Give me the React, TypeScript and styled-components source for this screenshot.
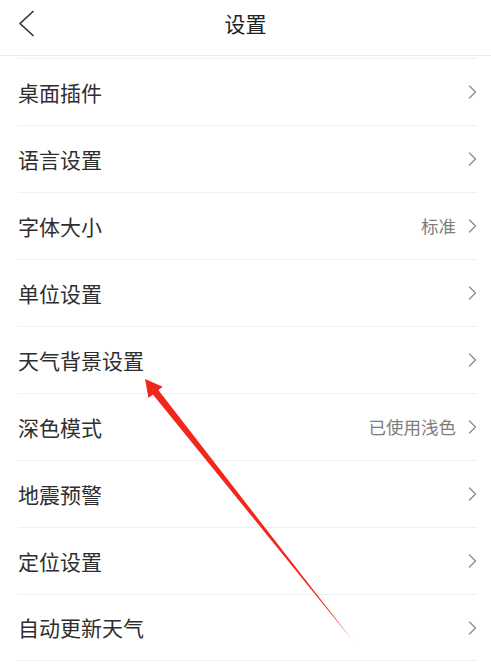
import React from "react";
import styled, { createGlobalStyle } from "styled-components";

const Global = createGlobalStyle`
  html, body { margin: 0; padding: 0; background: #fff; }
  body { font-family: "Noto Sans CJK SC", "Noto Sans", sans-serif; }
`;

const Page = styled.div`
  position: relative;
  width: 491px;
  height: 664px;
  overflow: hidden;
  background: #fff;
`;

const Header = styled.header`
  height: 56px;
  box-sizing: border-box;
  border-bottom: 1px solid #ececec;
  display: grid;
  grid-template-columns: 60px 1fr 60px;
  align-items: center;
  padding-bottom: 8px;
`;

const Back = styled.div`
  padding-left: 17px;
  display: flex;
  align-items: center;
`;

const Title = styled.h1`
  margin: 0;
  text-align: center;
  font-size: 21px;
  font-weight: 400;
  color: #222;
  line-height: 1;
`;

const List = styled.ul`
  list-style: none;
  margin: 2px 0 0;
  padding: 0 14px 0 18px;
`;

const Row = styled.li`
  height: 67px;
  box-sizing: border-box;
  border-top: 1px solid #f0f0f0;
  display: flex;
  align-items: center;
  justify-content: space-between;
  &:last-child { border-bottom: 1px solid #f0f0f0; }
`;

const Label = styled.span`
  font-size: 21px;
  color: #2e2e2e;
  line-height: 1;
`;

const Right = styled.span`
  display: flex;
  align-items: center;
  gap: 12px;
`;

const Value = styled.span`
  font-size: 17.5px;
  color: #7d7d7d;
  line-height: 1;
`;

const Overlay = styled.svg`
  position: absolute;
  left: 0;
  top: 0;
  pointer-events: none;
`;

const Chevron = () => (
  <svg width="9" height="14" viewBox="0 0 9 14">
    <path d="M1.5 1 L7.5 7 L1.5 13" fill="none" stroke="#8e8e8e" strokeWidth="1.4" strokeLinecap="round" strokeLinejoin="round" />
  </svg>
);

const items: { label: string; value?: string }[] = [
  { label: "桌面插件" },
  { label: "语言设置" },
  { label: "字体大小", value: "标准" },
  { label: "单位设置" },
  { label: "天气背景设置" },
  { label: "深色模式", value: "已使用浅色" },
  { label: "地震预警" },
  { label: "定位设置" },
  { label: "自动更新天气" },
];

export default function App() {
  return (
    <Page>
      <Global />
      <Header>
        <Back>
          <svg width="18" height="28" viewBox="0 0 18 28">
            <path d="M16 1.5 L3 13.5 L16 25.5" fill="none" stroke="#333" strokeWidth="1.7" strokeLinecap="round" strokeLinejoin="round" />
          </svg>
        </Back>
        <Title>设置</Title>
        <div />
      </Header>
      <List>
        {items.map((it) => (
          <Row key={it.label}>
            <Label>{it.label}</Label>
            <Right>
              {it.value && <Value>{it.value}</Value>}
              <Chevron />
            </Right>
          </Row>
        ))}
      </List>
      <Overlay width="491" height="664" viewBox="0 0 491 664">
        <polygon
          points="145,379 162.7,386.7 158.3,390.1 353,641 152.9,394.5 148.5,397.9"
          fill="#f3261b"
        />
      </Overlay>
    </Page>
  );
}
